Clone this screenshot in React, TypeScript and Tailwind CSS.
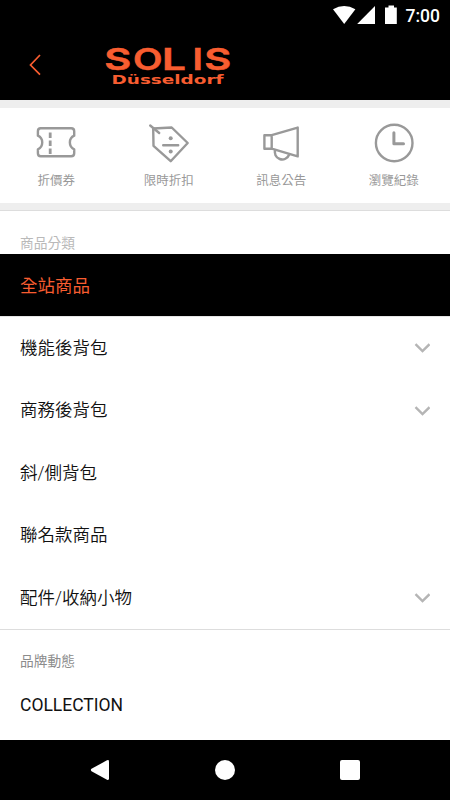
import type { ReactNode } from "react";

type QuickLink = {
  label: string;
  icon: ReactNode;
};

type Category = {
  name: string;
  active?: boolean;
  expandable?: boolean;
};

const quickLinks: QuickLink[] = [
  {
    label: "折價券",
    icon: (
      <>
        <path d="M7 8.2H34.5Q37.5 8.2 37.5 11.2V15.7A7.5 7.5 0 0 0 37.5 29.3V33.2Q37.5 36.2 34.5 36.2H4Q1.2 36.2 1.2 33.2V29.3A7.5 7.5 0 0 0 1.2 15.7V11.2Q1.2 8.2 4 8.2Z" />
        <path d="M13.5 12.5V18M13.5 20.5V26M13.5 28.5V34" strokeWidth="2.8" />
      </>
    ),
  },
  {
    label: "限時折扣",
    icon: (
      <>
        <path d="M3.5 8.5L22 7.5L38 23L21 41.2L3.8 25.8Z" />
        <path d="M.5 5.5L9.5 13M13.5 25.2H28.5" strokeLinecap="round" />
        <circle cx="21" cy="18.2" r="2" fill="currentColor" stroke="none" />
        <circle cx="21" cy="31.5" r="2" fill="currentColor" stroke="none" />
      </>
    ),
  },
  {
    label: "訊息公告",
    icon: (
      <>
        <path d="M2.7 15.2H10V28.7H2.7ZM10 15.2L36 7.6V36.4L10 28.7" />
        <path d="M13.5 29.5A7.2 7.2 0 0 0 27.5 34.5" />
      </>
    ),
  },
  {
    label: "瀏覽紀錄",
    icon: (
      <>
        <circle cx="19.5" cy="23" r="18.3" />
        <path d="M19.2 12.8V23.8H28.8" strokeWidth="3" strokeLinecap="round" />
      </>
    ),
  },
];

const categories: Category[] = [
  { name: "全站商品", active: true },
  { name: "機能後背包", expandable: true },
  { name: "商務後背包", expandable: true },
  { name: "斜/側背包" },
  { name: "聯名款商品" },
  { name: "配件/收納小物", expandable: true },
];

const StatusBar = () => (
  <div className="flex h-[30px] items-center justify-end pr-2.5 text-white">
    <svg width="66" height="30" viewBox="0 0 66 30" fill="currentColor">
      <path d="M0 9.3Q11.2 2.5 22.4 9.3L11.2 24Z" />
      <path d="M42 6V24H24.2Z" />
      <path d="M55.5 5.5H61V7.5H63.8V24H52V7.5H55.5Z" />
    </svg>
    <span className="ml-[7px] pt-0.5 font-['Roboto'] text-[17.5px] leading-[30px] font-medium">7:00</span>
  </div>
);

const Logo = () => (
  <svg width="134" height="56" viewBox="0 -6 134 56" className="-mt-1.5 ml-[62px] overflow-visible" fill="#f85d30">
    <text y="26.5" fontSize="30.5" fontWeight="600" fontFamily="Inter, sans-serif" stroke="#f85d30" strokeWidth=".5">
      <tspan x="1.3" textLength="27" lengthAdjust="spacingAndGlyphs">S</tspan>
      <tspan x="30" textLength="29.5" lengthAdjust="spacingAndGlyphs">O</tspan>
      <tspan x="59" textLength="24" lengthAdjust="spacingAndGlyphs">L</tspan>
      <tspan x="89.5" textLength="10.5" lengthAdjust="spacingAndGlyphs">I</tspan>
      <tspan x="101.3" textLength="27" lengthAdjust="spacingAndGlyphs">S</tspan>
    </text>
    <text
      x="8.5"
      y="41.2"
      fontSize="11.5"
      fontWeight="700"
      fontFamily="'DejaVu Sans', sans-serif"
      textLength="112"
      lengthAdjust="spacingAndGlyphs"
    >
      Düsseldorf
    </text>
  </svg>
);

const ChevronDown = () => (
  <svg width="16" height="10" viewBox="0 0 16 10" fill="none" stroke="#b5b5b5" strokeWidth="2.4">
    <path d="M1.5 1.2L8.5 8L15.5 1.2" />
  </svg>
);

const NavigationBar = () => (
  <nav className="flex h-[60px] items-center justify-between bg-black pr-[90px] pl-[90px] text-white">
    <svg width="20" height="22" viewBox="0 0 20 22" fill="currentColor">
      <path d="M1.5 9.8L17 1.3Q19 .5 19 2.5V19.5Q19 21.5 17 20.7L1.5 12.2Q.2 11 1.5 9.8Z" />
    </svg>
    <div className="size-[20px] rounded-full bg-white" />
    <div className="size-[20px] rounded-[2px] bg-white" />
  </nav>
);

const App = () => {
  return (
    <div className="flex h-[800px] w-[450px] flex-col overflow-hidden bg-white font-['Roboto','Noto_Sans_CJK_TC',sans-serif]">
      <header className="h-[100px] shrink-0 bg-black">
        <StatusBar />
        <div className="flex h-[70px] items-start pt-[12.5px] pl-[29px]">
          <button className="mt-[11.5px]">
            <svg width="12" height="22" viewBox="0 0 12 22" fill="none" stroke="#f85d30" strokeWidth="1.7">
              <path d="M11 1L1.5 11L11 20.7" />
            </svg>
          </button>
          <Logo />
        </div>
      </header>

      <div className="h-[7.5px] shrink-0 bg-[#eeeeee]" />

      {/* Quick links */}
      <div className="grid h-[95px] shrink-0 grid-cols-4 pt-[12.5px]">
        {quickLinks.map((link) => (
          <div key={link.label} className="flex flex-col items-center text-[#999999]">
            <svg width="40" height="46" viewBox="-.7 0 40 46" fill="none" stroke="currentColor" strokeWidth="2.4" strokeLinejoin="round" className="overflow-visible">
              {link.icon}
            </svg>
            <span className="mt-[4.5px] text-[12.5px] leading-[19px]">{link.label}</span>
          </div>
        ))}
      </div>

      <div className="h-[8.5px] shrink-0 border-b border-[#dddddd] bg-[#eeeeee]" />

      <main className="flex-1 overflow-hidden">
        <h2 className="h-[43px] pt-[22px] pl-5 text-[13.75px] leading-5 font-normal text-[#b9b9b9]">商品分類</h2>
        <ul className="border-b border-[#dddddd]">
          {categories.map((category) =>
            category.active ? (
              <li key={category.name} className="flex h-[62px] items-center bg-black px-5 pt-0.5 text-[17.5px] text-[#f85d30]">
                {category.name}
              </li>
            ) : (
              <li
                key={category.name}
                className="flex h-[62.5px] items-center justify-between pt-[1.5px] pr-5 pl-5 text-[17.5px] font-[350] text-[#111111] nth-2:border-t nth-2:border-[#e5e5e5] nth-2:pt-0"
              >
                {category.name}
                {category.expandable && <ChevronDown />}
              </li>
            ),
          )}
        </ul>

        <h2 className="pt-[21px] pl-5 text-[13.75px] leading-5 font-normal text-[#8c8c8c]">品牌動態</h2>
        <p className="pt-[22px] pl-5 text-[17.5px] leading-6 text-[#111111]">COLLECTION</p>
      </main>

      <NavigationBar />
    </div>
  );
};

export default App;
